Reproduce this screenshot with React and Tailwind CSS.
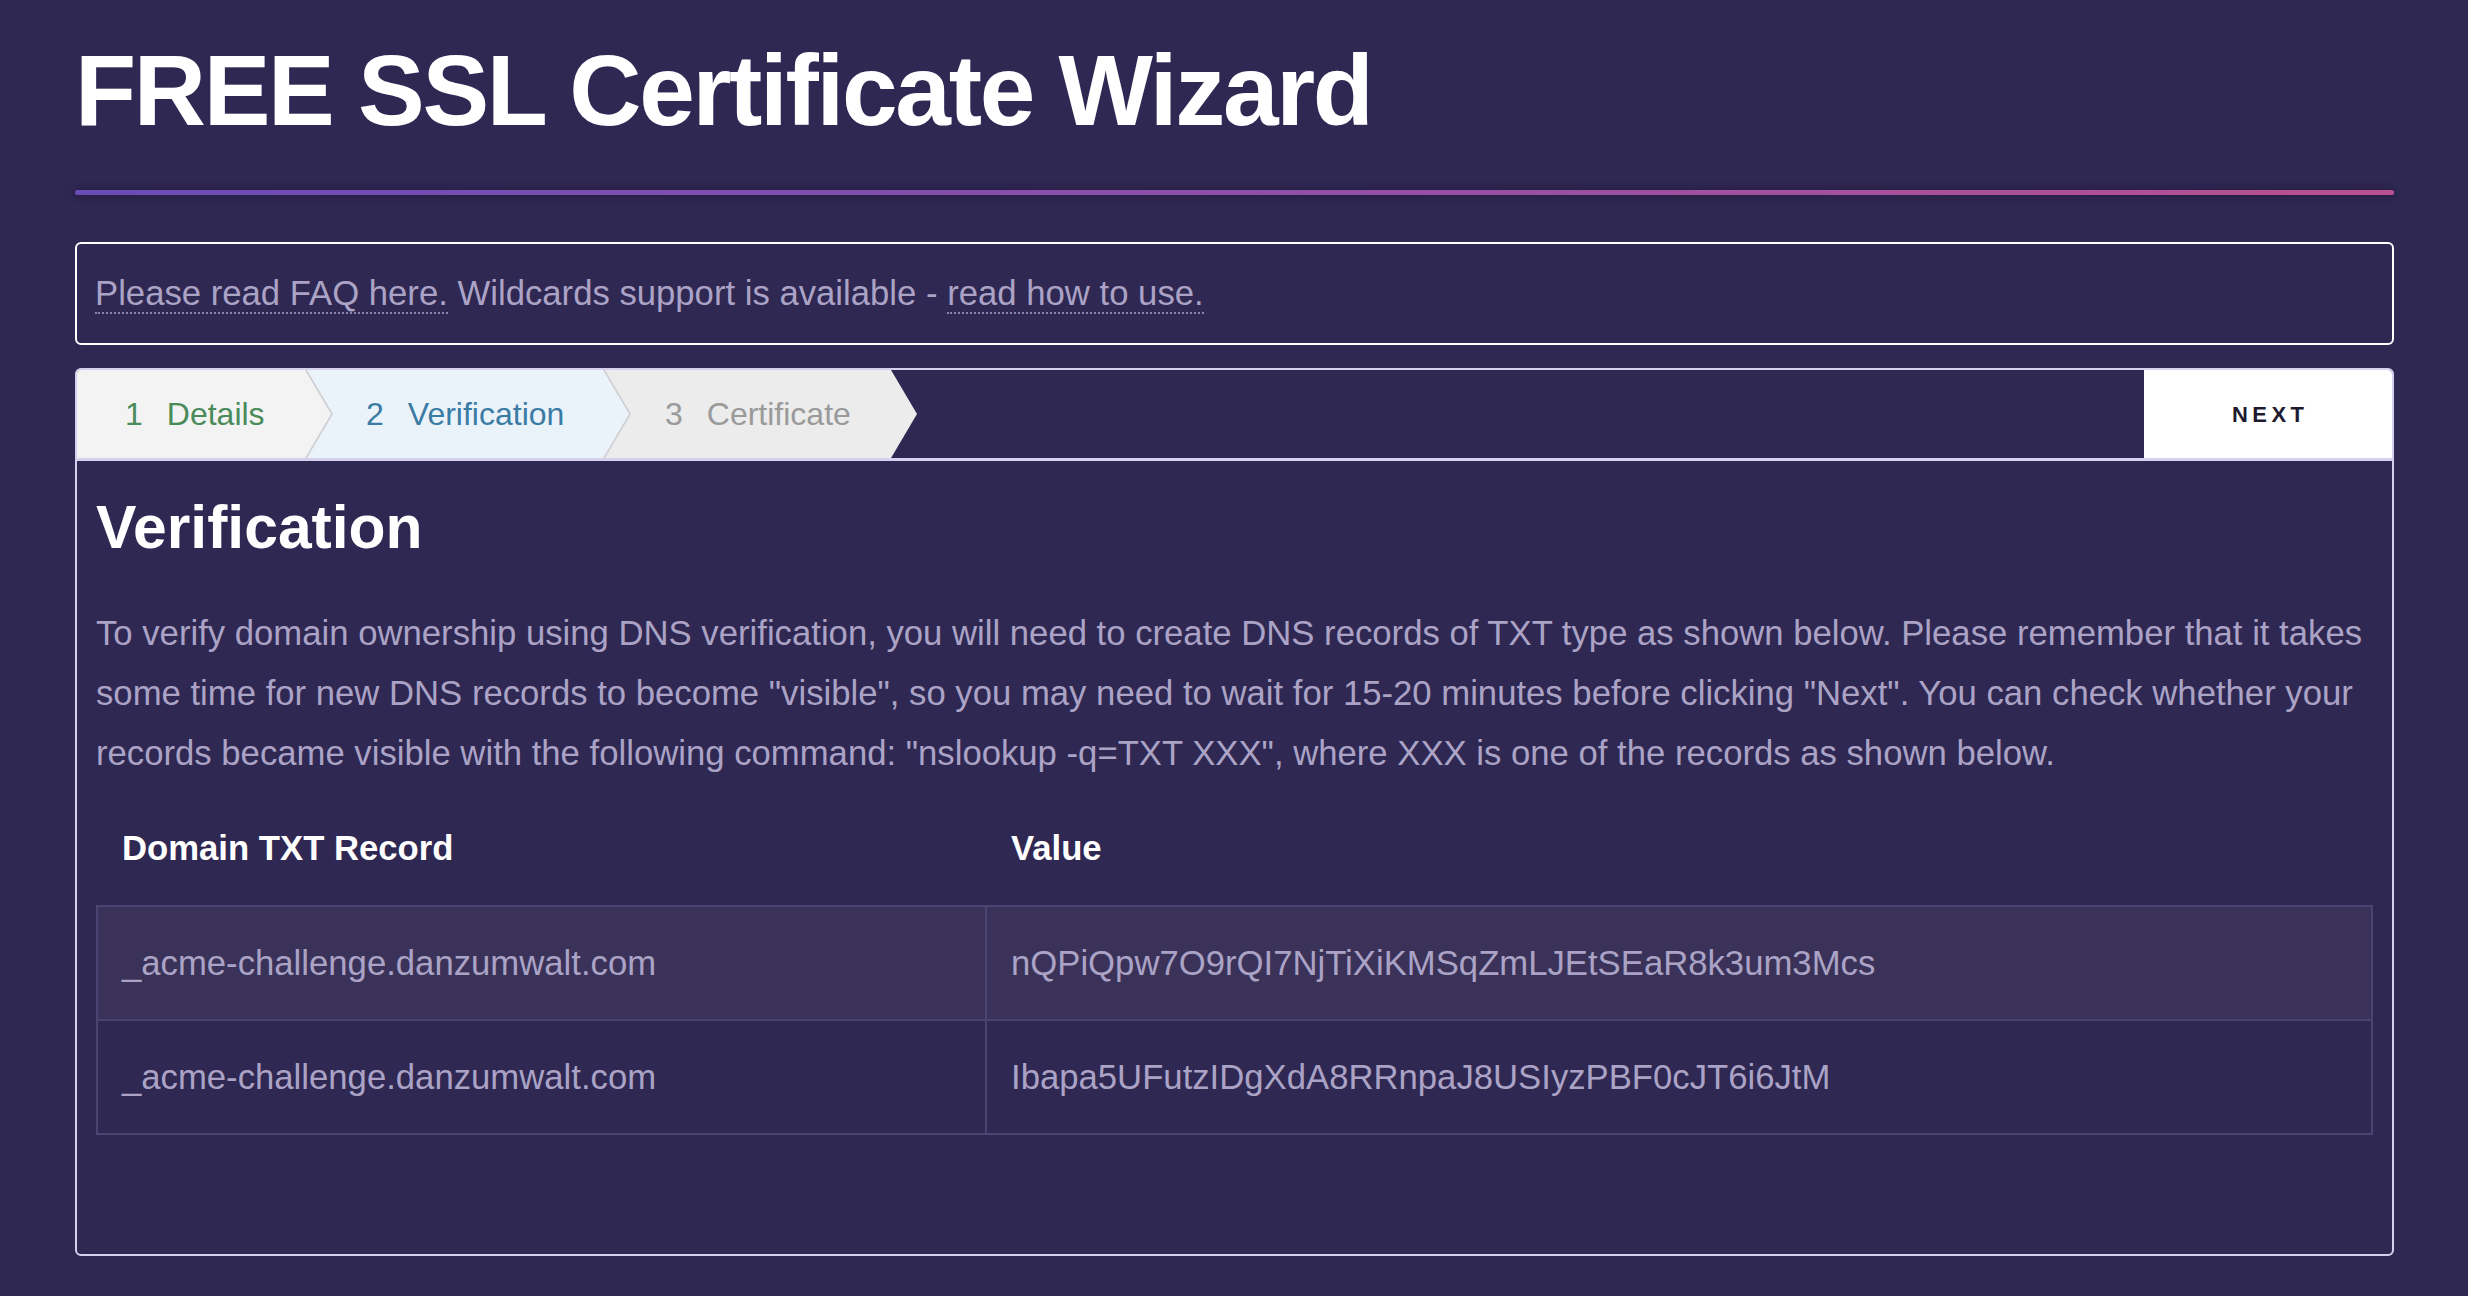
import React from "react";

const tabClip =
  "[clip-path:polygon(0_0,calc(100%-26px)_0,100%_50%,calc(100%-26px)_100%,0_100%)]";

function Tab({ num, label, width, bg, color, pl, z, first, divider }) {
  return (
    <div
      className={`relative h-full shrink-0 ${z} ${first ? "" : "-ml-[26px]"} ${tabClip} ${divider ? "bg-[#cfcfd4]" : ""}`}
      style={{ width }}
    >
      <div
        className={`h-full w-[calc(100%-2px)] ${tabClip} flex items-center text-[32px] leading-[88px]`}
        style={{ background: bg, color, paddingLeft: pl }}
      >
        <span>{num}</span>
        <span className="ml-[24px]">{label}</span>
      </div>
    </div>
  );
}

export default function App() {
  const rows = [
    ["_acme-challenge.danzumwalt.com", "nQPiQpw7O9rQI7NjTiXiKMSqZmLJEtSEaR8k3um3Mcs"],
    ["_acme-challenge.danzumwalt.com", "Ibapa5UFutzIDgXdA8RRnpaJ8USIyzPBF0cJT6i6JtM"],
  ];
  return (
    <div className="min-h-screen w-full bg-[#2f2853] pl-[75px] pr-[74px] pt-[40px] pb-[40px] font-['Liberation_Sans',Arial,sans-serif]">
      <h1 className="text-[100px] leading-[100px] font-bold text-white tracking-[-2.3px]">
        FREE SSL Certificate Wizard
      </h1>
      <div className="mt-[50px] h-[5px] rounded-full bg-linear-to-r from-[#6a4cb6] via-[#8e4fa9] to-[#b9508f] shadow-[0_0_8px_rgba(20,10,40,0.6)]" />

      <div className="mt-[47px] rounded-[6px] border-2 border-white px-[18px] py-[24px] text-[34.7px] leading-[51px] text-[#aba3c5]">
        <span className="border-b-2 border-dotted border-[#8d85a8]">Please read FAQ here.</span>{" "}
        Wildcards support is available -{" "}
        <span className="border-b-2 border-dotted border-[#8d85a8]">read how to use.</span>
      </div>

      <div className="mt-[23px] overflow-hidden rounded-[6px] border-2 border-[#d6d0ee]">
        <div className="flex h-[91px] border-b-[3px] border-[#d6d0ee]">
          <Tab num="1" label="Details" width={256} bg="#f3f3f3" color="#4a8b5a" pl={48} z="z-30" first divider />
          <Tab num="2" label="Verification" width={324} bg="#ebf3fa" color="#3b7ca5" pl={59} z="z-20" divider />
          <Tab num="3" label="Certificate" width={314} bg="#ececec" color="#9a9a9a" pl={60} z="z-10" />
          <div className="flex-1" />
          <button className="flex h-full w-[248px] items-center justify-center bg-white pl-[0.2em] text-[22px] font-bold tracking-[0.2em] text-[#1e1a30]">
            NEXT
          </button>
        </div>

        <div className="px-[19px] pt-[33px] pb-[119px]">
          <h2 className="text-[60.6px] leading-[66px] font-bold text-white">Verification</h2>
          <p className="mt-[43px] text-[34.7px] leading-[60px] text-[#aba3c5]">
            To verify domain ownership using DNS verification, you will need to create DNS records of TXT type as
            shown below. Please remember that it takes some time for new DNS records to become "visible", so you may
            need to wait for 15-20 minutes before clicking "Next". You can check whether your records became visible
            with the following command: "nslookup -q=TXT XXX", where XXX is one of the records as shown below.
          </p>

          <div className="mt-[17px] grid grid-cols-[887px_1fr] border-x-2 border-transparent pt-[18px] pb-[27px] text-[34.7px] leading-[60px] font-bold text-white">
            <div className="px-[24px]">Domain TXT Record</div>
            <div className="border-l-2 border-transparent px-[24px]">Value</div>
          </div>

          <div className="border-2 border-[#4b4470] text-[34.7px] leading-[60px] text-[#aba3c5]">
            {rows.map((r, i) => (
              <div
                key={i}
                className={`grid grid-cols-[887px_1fr] ${i === 0 ? "bg-[#3a3259] border-b-2 border-[#4b4470]" : ""}`}
              >
                <div className="px-[24px] py-[26px]">{r[0]}</div>
                <div className="border-l-2 border-[#4b4470] px-[24px] py-[26px]">{r[1]}</div>
              </div>
            ))}
          </div>
        </div>
      </div>
    </div>
  );
}
